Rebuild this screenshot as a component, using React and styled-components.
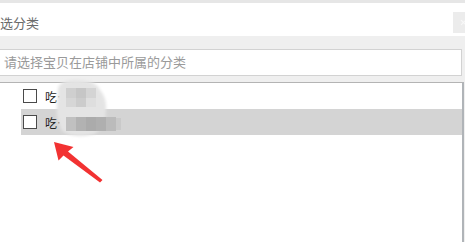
import React from "react";
import styled, { createGlobalStyle } from "styled-components";

const Global = createGlobalStyle`
  html, body { margin: 0; padding: 0; background: #fff; overflow: hidden; }
  body { font-family: "Noto Sans CJK SC", "Noto Sans", sans-serif; }
`;

const Page = styled.div`
  position: relative;
  width: 465px;
  height: 242px;
  display: flex;
  flex-direction: column;
  overflow: hidden;
  background: #efefef;
`;

const TopStrip = styled.div`
  height: 3px;
  background: #e6e6e6;
`;

const Header = styled.div`
  height: 33px;
  background: #fff;
  display: flex;
  justify-content: space-between;
  align-items: flex-start;
`;

const Title = styled.div`
  margin-left: 0;
  margin-top: 11px;
  font-size: 13px;
  line-height: 18px;
  color: #6a6a6a;
`;

const CloseButton = styled.div`
  position: relative;
  width: 12px;
  height: 21px;
  margin-top: 9px;
  background: #ececec;
  &::before,
  &::after {
    content: "";
    position: absolute;
    left: 7px;
    top: 10px;
    width: 7px;
    height: 1px;
    background: #f8f8f8;
    transform: rotate(45deg);
  }
  &::after {
    transform: rotate(-45deg);
  }
`;

const Band = styled.div`
  padding: 13px 3px 6px 0;
`;

const SearchInput = styled.div`
  height: 27px;
  box-sizing: border-box;
  margin-left: -1px;
  border: 1px solid #d2d2d2;
  background: #fff;
  padding-left: 4px;
  font-size: 13px;
  line-height: 24px;
  color: #9a9a9a;
`;

const List = styled.div`
  flex: 1;
  margin-right: 1px;
  background: #fff;
  border-top: 1px solid #b4b4b4;
  border-right: 2px solid #b0b4b8;
  padding-left: 21px;
`;

const Row = styled.div`
  height: 26px;
  display: flex;
  align-items: center;
  background: ${(p) => (p.$active ? "#d4d4d4" : "transparent")};
`;

const Check = styled.span`
  width: 12px;
  height: 12px;
  margin-left: 2px;
  border: 1px solid #4a4a4a;
  background: #fff;
  flex-shrink: 0;
`;

const Label = styled.span`
  margin-left: 8px;
  font-size: 12px;
  color: #222;
`;

const Overlay = styled.svg`
  position: absolute;
  left: 0;
  top: 0;
  pointer-events: none;
`;

export default function App() {
  return (
    <>
      <Global />
      <Page>
        <TopStrip />
        <Header>
          <Title>选分类</Title>
          <CloseButton />
        </Header>
        <Band>
          <SearchInput>请选择宝贝在店铺中所属的分类</SearchInput>
        </Band>
        <List>
          <Row>
            <Check />
            <Label>吃…</Label>
          </Row>
          <Row $active>
            <Check />
            <Label>吃…</Label>
          </Row>
        </List>
        <Overlay width="465" height="242" viewBox="0 0 465 242">
          <defs>
            <filter id="soft" x="-20%" y="-20%" width="140%" height="140%">
              <feGaussianBlur stdDeviation="1.5" />
            </filter>
            <filter id="soft1" x="-20%" y="-20%" width="140%" height="140%">
              <feGaussianBlur stdDeviation="0.7" />
            </filter>
          </defs>
          <g filter="url(#soft)">
            <path
              d="M58 90 Q58 80 76 80 Q96 80 100 90 Q107 98 106 110 Q106 128 94 134 Q74 139 62 131 Q55 118 57 104 Z"
              fill="#e4e4e4"
            />
          </g>
          <g filter="url(#soft1)">
            <rect x="66" y="88" width="10" height="10" fill="#cfcfcf" />
            <rect x="76" y="88" width="10" height="10" fill="#c6c6c6" />
            <rect x="86" y="88" width="10" height="10" fill="#d4d4d4" />
            <rect x="66" y="98" width="10" height="9" fill="#d6d6d6" />
            <rect x="76" y="98" width="10" height="9" fill="#cccccc" />
            <rect x="86" y="98" width="10" height="9" fill="#dedede" />
            <rect x="66" y="117" width="10" height="14" fill="#c0c0c0" />
            <rect x="76" y="117" width="10" height="14" fill="#b2b2b2" />
            <rect x="86" y="117" width="10" height="14" fill="#ababab" />
            <rect x="96" y="117" width="10" height="14" fill="#afafaf" />
            <rect x="106" y="117" width="10" height="14" fill="#bbbbbb" />
            <rect x="116" y="118" width="5" height="12" fill="#c9c9c9" />
          </g>
          <polygon
            points="54,142 73.5,147 68,151.5 102.5,180 100,182.5 63.5,155.5 58.5,160.5"
            fill="#f23333"
            filter="url(#soft1)"
          />
        </Overlay>
      </Page>
    </>
  );
}
